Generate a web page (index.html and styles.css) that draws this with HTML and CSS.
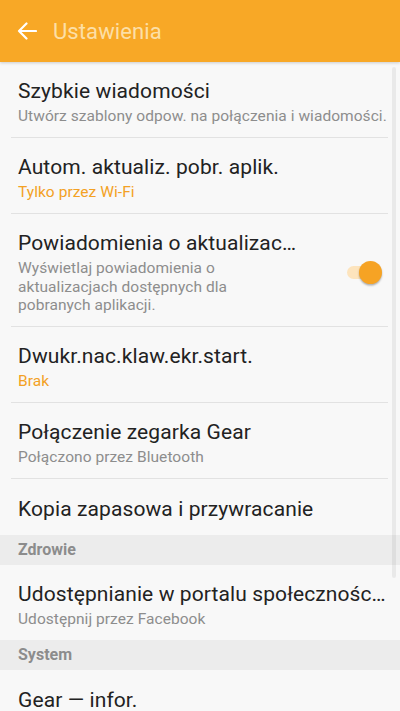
FILE: index.html
```html
<!DOCTYPE html>
<html lang="pl">
<head>
<meta charset="utf-8">
<link rel="stylesheet" href="styles.css">
</head>
<body>
<div class="screen">
  <header class="appbar">
    <svg class="back" width="20" height="18" viewBox="0 0 20 18"><path d="M19 9H2M9.5 1.5L2 9l7.5 7.5" fill="none" stroke="#fff" stroke-width="2.2" stroke-linecap="round" stroke-linejoin="round"/></svg>
    <h1 class="title">Ustawienia</h1>
  </header>
  <main class="list">
    <div class="item">
      <div class="text">
        <div class="main">Szybkie wiadomości</div>
        <div class="sub">Utwórz szablony odpow. na połączenia i wiadomości.</div>
      </div>
    </div>
    <div class="item">
      <div class="text">
        <div class="main">Autom. aktualiz. pobr. aplik.</div>
        <div class="sub accent">Tylko przez Wi-Fi</div>
      </div>
    </div>
    <div class="item tall">
      <div class="text narrow">
        <div class="main">Powiadomienia o aktualizac…</div>
        <div class="sub">Wyświetlaj powiadomienia o aktualizacjach dostępnych dla pobranych aplikacji.</div>
      </div>
      <div class="switch"><span class="track"></span><span class="thumb"></span></div>
    </div>
    <div class="item">
      <div class="text">
        <div class="main">Dwukr.nac.klaw.ekr.start.</div>
        <div class="sub accent">Brak</div>
      </div>
    </div>
    <div class="item">
      <div class="text">
        <div class="main">Połączenie zegarka Gear</div>
        <div class="sub">Połączono przez Bluetooth</div>
      </div>
    </div>
    <div class="item single last">
      <div class="text">
        <div class="main">Kopia zapasowa i przywracanie</div>
      </div>
    </div>
    <div class="section">Zdrowie</div>
    <div class="item last">
      <div class="text">
        <div class="main">Udostępnianie w portalu społecznośc…</div>
        <div class="sub">Udostępnij przez Facebook</div>
      </div>
    </div>
    <div class="section">System</div>
    <div class="item single last">
      <div class="text">
        <div class="main">Gear — infor.</div>
      </div>
    </div>
    <div class="scrollbar"></div>
  </main>
</div>
</body>
</html>
```
FILE: styles.css
```css
* { box-sizing: border-box; }
html, body {
  margin: 0;
  padding: 0;
  width: 400px;
  height: 711px;
  overflow: hidden;
  background: #f8f8f8;
  font-family: Roboto, "Noto Sans", sans-serif;
}
.screen {
  width: 400px;
  height: 711px;
  display: flex;
  flex-direction: column;
}
.appbar {
  height: 62px;
  flex: none;
  background: #f8a826;
  display: flex;
  align-items: center;
  padding-left: 17px;
  box-shadow: 0 1px 3px rgba(0,0,0,0.18);
  position: relative;
  z-index: 2;
}
.back { flex: none; }
.title {
  margin: 0 0 0 16px;
  font-weight: 400;
  font-size: 22px;
  color: rgba(255,248,225,0.7);
  letter-spacing: 0.1px;
}
.list {
  position: relative;
  flex: 1;
  overflow: hidden;
}
.item {
  display: flex;
  align-items: center;
  margin: 0 12px 0 11px;
  padding: 16px 0 11px 7px;
  border-bottom: 1px solid #e2e2e2;
}
.item.tall { padding: 16px 0 11px 7px; }
.item.single { padding: 17px 0 13px 7px; }
.item.last { border-bottom: none; }
.text { flex: 1; min-width: 0; }
.text.narrow { flex: none; width: 260px; }
.main {
  font-size: 21px;
  line-height: 26px;
  color: #222;
  white-space: nowrap;
  letter-spacing: 0.1px;
}
.sub {
  font-size: 15.5px;
  line-height: 19px;
  color: #8d8d8d;
  margin-top: 3px;
  letter-spacing: 0.05px;
}
.narrow .sub { line-height: 18.5px; }
.sub.accent { color: #f3a124; }
.switch {
  position: relative;
  margin-left: auto;
  margin-right: 6px;
  width: 36px;
  height: 24px;
  flex: none;
}
.track {
  position: absolute;
  left: 1px;
  top: 6px;
  width: 26px;
  height: 13px;
  border-radius: 7px;
  background: #fde4bd;
}
.thumb {
  position: absolute;
  right: 0;
  top: 1px;
  width: 23px;
  height: 23px;
  border-radius: 50%;
  background: #f6a324;
  box-shadow: 0 1.5px 2px rgba(0,0,0,0.3);
}
.section {
  height: 30px;
  background: #ececec;
  padding-left: 18px;
  font-size: 16px;
  font-weight: 700;
  color: #8c8c8c;
  display: flex;
  align-items: center;
}
.scrollbar {
  position: absolute;
  right: 4px;
  top: 5px;
  width: 4px;
  height: 511px;
  background: rgba(0,0,0,0.06);
  border-radius: 2px;
}
```
